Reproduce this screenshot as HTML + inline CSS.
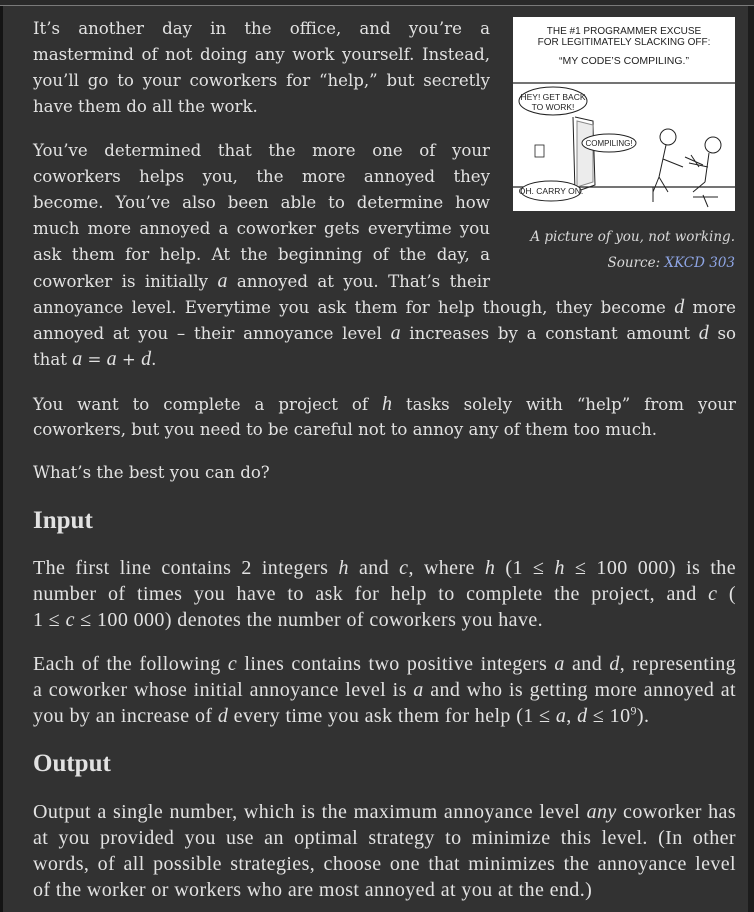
<!DOCTYPE html>
<html><head><meta charset="utf-8"><style>
body{margin:0;width:754px;height:912px;background:#323232;overflow:hidden;position:relative;font-family:"DejaVu Serif",serif;color:#e2e2e2;font-size:16.6px}
.top{position:absolute;left:0;top:0;width:754px;height:5px;background:#2a2a2a;border-bottom:1px solid #7a7a7a}
.lstrip{position:absolute;left:0;top:6px;width:3px;height:906px;background:#141414}
.rstrip{position:absolute;right:0;top:6px;width:6px;height:906px;background:#1c1c1c}
.p{position:absolute;left:33px}
.l{height:26px;line-height:26px;white-space:nowrap;text-align:justify;text-align-last:justify}
.e{text-align-last:left}
.c{font-family:"Liberation Serif",serif;font-size:20px;letter-spacing:0.4px}
i.m{font-style:italic;font-family:"Liberation Serif",serif;font-size:20px}
sup{font-size:12px;line-height:0}
h2{position:absolute;left:33px;margin:0;font-family:"Liberation Serif",serif;font-size:25px;font-weight:bold;line-height:30px}
.cap{position:absolute;right:19px;font-style:italic;font-size:13.5px;color:#d8d8d8}
a{color:#8fa6e6;text-decoration:none}
</style></head><body>
<div class="top"></div><div class="lstrip"></div><div class="rstrip"></div>

<div class="p" style="top:16px;width:457px">
<div class="l">It’s another day in the office, and you’re a</div>
<div class="l">mastermind of not doing any work yourself. Instead,</div>
<div class="l">you’ll go to your coworkers for “help,” but secretly</div>
<div class="l e">have them do all the work.</div>
</div>

<div class="p" style="top:138px;width:457px">
<div class="l">You’ve determined that the more one of your</div>
<div class="l">coworkers helps you, the more annoyed they</div>
<div class="l">become. You’ve also been able to determine how</div>
<div class="l">much more annoyed a coworker gets everytime you</div>
<div class="l">ask them for help. At the beginning of the day, a</div>
<div class="l">coworker is initially <i class="m">a</i> annoyed at you. That’s their</div>
</div>
<div class="p" style="top:294px;width:703px">
<div class="l">annoyance level. Everytime you ask them for help though, they become <i class="m">d</i> more</div>
<div class="l">annoyed at you – their annoyance level <i class="m">a</i> increases by a constant amount <i class="m">d</i> so</div>
<div class="l e">that <i class="m">a</i> = <i class="m">a</i> + <i class="m">d</i>.</div>
</div>

<div class="p" style="top:391px;width:703px">
<div class="l">You want to complete a project of <i class="m">h</i> tasks solely with “help” from your</div>
<div class="l e">coworkers, but you need to be careful not to annoy any of them too much.</div>
</div>
<div class="p" style="top:460px;width:703px"><div class="l e">What’s the best you can do?</div></div>

<h2 style="top:506px">Input</h2>
<div class="p c" style="top:555px;width:703px">
<div class="l">The first line contains 2 integers <i class="m">h</i> and <i class="m">c</i>, where <i class="m">h</i> (1 ≤ <i class="m">h</i> ≤ 100 000) is the</div>
<div class="l">number of times you have to ask for help to complete the project, and <i class="m">c</i> (</div>
<div class="l e">1 ≤ <i class="m">c</i> ≤ 100 000) denotes the number of coworkers you have.</div>
</div>
<div class="p c" style="top:651px;width:703px">
<div class="l">Each of the following <i class="m">c</i> lines contains two positive integers <i class="m">a</i> and <i class="m">d</i>, representing</div>
<div class="l">a coworker whose initial annoyance level is <i class="m">a</i> and who is getting more annoyed at</div>
<div class="l e">you by an increase of <i class="m">d</i> every time you ask them for help (1 ≤ <i class="m">a</i>, <i class="m">d</i> ≤ 10<sup>9</sup>).</div>
</div>

<h2 style="top:749px">Output</h2>
<div class="p c" style="top:799px;width:703px">
<div class="l">Output a single number, which is the maximum annoyance level <i>any</i> coworker has</div>
<div class="l">at you provided you use an optimal strategy to minimize this level. (In other</div>
<div class="l">words, of all possible strategies, choose one that minimizes the annoyance level</div>
<div class="l e">of the worker or workers who are most annoyed at you at the end.)</div>
</div>

<svg style="position:absolute;left:513px;top:17px" width="222" height="194" viewBox="0 0 222 194" font-family="Liberation Sans, sans-serif" fill="none" stroke="#222">
<rect x="0" y="0" width="222" height="194" fill="#fff" stroke="none"/>
<text x="111" y="17" font-size="10" text-anchor="middle" fill="#222" stroke="none">THE #1 PROGRAMMER EXCUSE</text>
<text x="111" y="28" font-size="10" text-anchor="middle" fill="#222" stroke="none">FOR LEGITIMATELY SLACKING OFF:</text>
<text x="111" y="47" font-size="10.5" text-anchor="middle" fill="#222" stroke="none">“MY CODE’S COMPILING.”</text>
<path d="M0 66 H222" stroke-width="1.2"/>
<path d="M0 170 H222" stroke-width="1.2"/>
<path d="M60 100 L62 175 M62 100 L80 104 L82 168 L62 175" stroke-width="1"/>
<path d="M64 104 L80 108 L80 165 L64 170Z" fill="#ececec" stroke="#888"/>
<ellipse cx="40" cy="84" rx="34" ry="14" fill="#fff"/>
<text x="40" y="83" font-size="8.5" text-anchor="middle" fill="#222" stroke="none">HEY! GET BACK</text>
<text x="40" y="93" font-size="8.5" text-anchor="middle" fill="#222" stroke="none">TO WORK!</text>
<ellipse cx="96" cy="126" rx="27" ry="9" fill="#fff"/>
<text x="96" y="129" font-size="8" text-anchor="middle" fill="#222" stroke="none">COMPILING!</text>
<rect x="22" y="128" width="9" height="12" stroke-width="0.8"/>
<ellipse cx="38" cy="174" rx="30" ry="10" fill="#fff"/>
<text x="38" y="177" font-size="8.5" text-anchor="middle" fill="#222" stroke="none">OH. CARRY ON.</text>
<circle cx="155" cy="120" r="8"/><path d="M153 128 L146 160 M150 142 L170 150 M146 160 L140 175 M146 160 L155 175 M130 170 L150 170 M140 170 L140 185"/>
<circle cx="200" cy="128" r="8"/><path d="M196 136 L192 165 M176 146 L195 150 M192 165 L180 175 M190 178 L195 190 M180 180 L205 180"/>
<path d="M172 140 L190 148 M178 138 L186 150"/>
</svg>
<div class="cap" style="top:229px">A picture of you, not working.</div>
<div class="cap" style="top:255px">Source: <a>XKCD 303</a></div>
</body></html>
